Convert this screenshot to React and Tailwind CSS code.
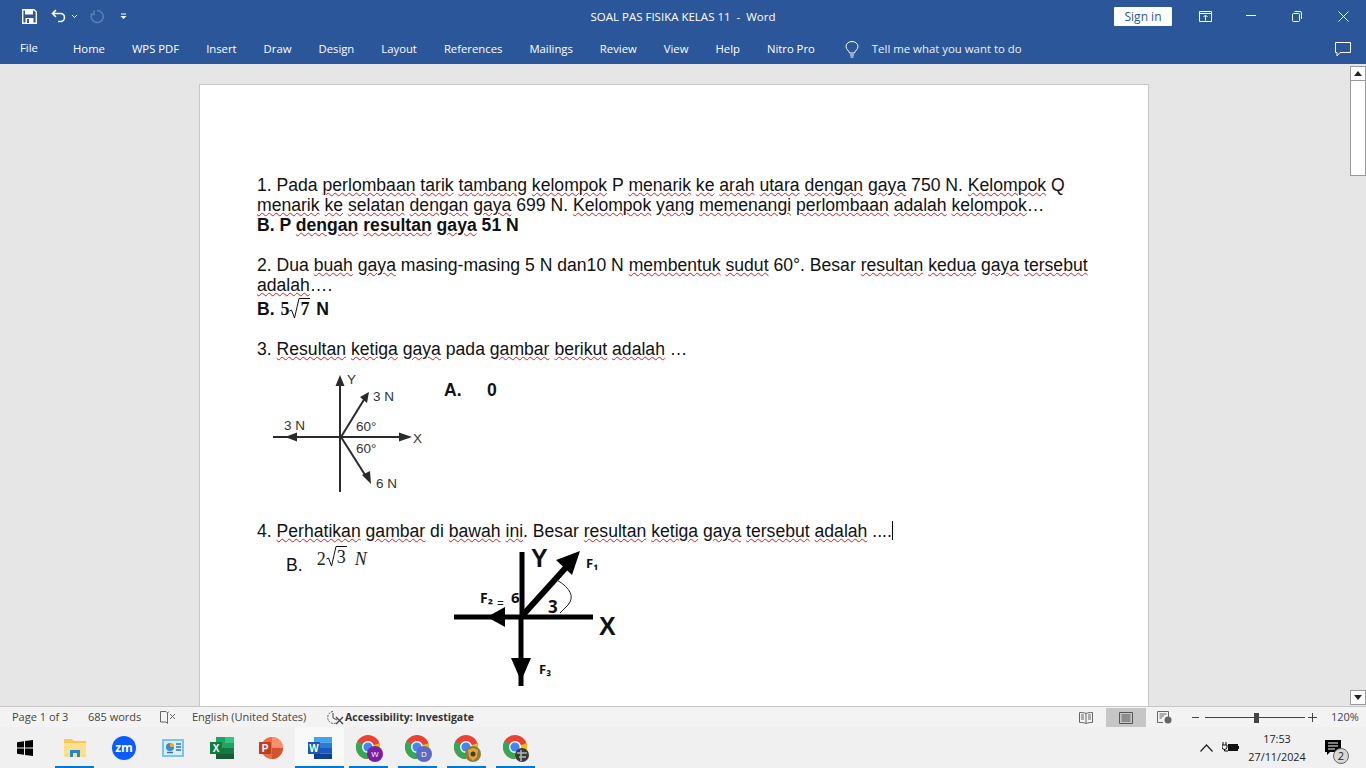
import React from 'react';

const TABS = ['Home', 'WPS PDF', 'Insert', 'Draw', 'Design', 'Layout', 'References', 'Mailings', 'Review', 'View', 'Help', 'Nitro Pro'];

// [word] = flagged by the spell checker
function Checked({ text }) {
  return text.split(/(\[[^\]]+\])/).map((part, i) =>
    part.startsWith('[') ? (
      <span key={i} className="underline decoration-wavy decoration-[#e5141f] decoration-1 underline-offset-1">{part.slice(1, -1)}</span>
    ) : (
      <span key={i}>{part}</span>
    )
  );
}

function Line({ text, bold }) {
  return (
    <div className={`h-5 leading-5 whitespace-pre ${bold ? 'font-bold' : ''}`}>
      <Checked text={text} />
    </div>
  );
}

function Root({ value, className }) {
  return (
    <span className={`inline-flex items-start ${className}`}>
      <svg width="11" height="22" viewBox="0 0 11 22" className="-mr-px">
        <path d="M0.5 13 L2.5 12 L5.5 20 L10 0.5 L11 0.5" fill="none" stroke="#111" strokeWidth="1" />
      </svg>
      <span className="border-t border-[#111] leading-[20px] px-px">{value}</span>
    </span>
  );
}

function Arrow1() {
  return (
    <svg width="170" height="125" viewBox="0 0 170 125" className="shrink-0">
      <g stroke="#2a2a2a" strokeWidth="2" fill="#2a2a2a">
        <path d="M86 8 L86 120" />
        <path d="M19 65 L150 65" />
        <path d="M87 65 L111 26" />
        <path d="M87 65 L113 106" />
        <path d="M86 3 L81.5 14 L90.5 14 Z" stroke="none" />
        <path d="M31 65 L43 60.5 L43 69.5 Z" stroke="none" />
        <path d="M158 65 L145 60.5 L145 69.5 Z" stroke="none" />
        <path d="M115 20 L106 25 L113 31 Z" stroke="none" />
        <path d="M117 112 L108 103 L116 99 Z" stroke="none" />
      </g>
      <g fontFamily="Liberation Sans, sans-serif" fontSize="13.5" fill="#333">
        <text x="93" y="12">Y</text>
        <text x="119" y="29">3 N</text>
        <text x="30" y="58">3 N</text>
        <text x="102" y="59">60°</text>
        <text x="102" y="81">60°</text>
        <text x="159" y="71">X</text>
        <text x="122" y="116">6 N</text>
      </g>
    </svg>
  );
}

function Arrow2() {
  return (
    <svg width="180" height="140" viewBox="0 0 180 140" className="shrink-0 overflow-visible">
      <g stroke="#000" strokeWidth="5" fill="#000">
        <path d="M86 5 L86 72" />
        <path d="M18 70 L157 70" />
        <path d="M85 72 L85 139" />
        <path d="M86 69 L134 16" strokeWidth="6" />
        <path d="M144 4 L120 13 L136 28 Z" stroke="none" />
        <path d="M51 70 L69 60 L69 80 Z" stroke="none" />
        <path d="M85 134 L75 111 L95 111 Z" stroke="none" />
      </g>
      <path d="M121 33 Q142 46 132 58 L124 66" fill="none" stroke="#222" strokeWidth="1" />
      <g fontFamily="Open Sans, sans-serif" fontWeight="700" fill="#111">
        <text x="95" y="20" fontSize="25" fontFamily="Liberation Sans, sans-serif">Y</text>
        <text x="163" y="88" fontSize="25" fontFamily="Liberation Sans, sans-serif">X</text>
        <text x="150" y="21" fontSize="13">F₁</text>
        <text x="44" y="56" fontSize="14">F₂</text>
        <text x="61" y="61" fontSize="12" fontWeight="400">=</text>
        <text x="75" y="56" fontSize="15">6</text>
        <text x="112" y="66" fontSize="17">3</text>
        <text x="103" y="127" fontSize="13">F₃</text>
      </g>
    </svg>
  );
}

function Chrome({ badge }) {
  return (
    <svg width="28" height="28" viewBox="0 0 28 28">
      <circle cx="13" cy="13" r="12" fill="#ea4335" />
      <path d="M13 13 L2.6 7 A12 12 0 0 0 13 25 Z" fill="#34a853" />
      <path d="M13 13 L24.4 9.3 A12 12 0 0 1 13 25 Z" fill="#fbbc05" />
      <circle cx="13" cy="13" r="6" fill="#fff" />
      <circle cx="13" cy="13" r="4.6" fill="#4285f4" />
      {badge}
    </svg>
  );
}

const Taskbar = [
  {
    key: 'files', on: true,
    icon: (
      <svg width="22" height="20" viewBox="0 0 22 20">
        <path d="M0 1 H8 L10 3 H22 V19 H0 Z" fill="#f9c94e" />
        <path d="M0 5 H22 V19 H0 Z" fill="#ffe08a" />
        <path d="M6 12 H16 V19 H13 V15 H9 V19 H6 Z" fill="#1e88d9" />
      </svg>
    ),
  },
  {
    key: 'zoom',
    icon: (
      <svg width="24" height="24" viewBox="0 0 24 24">
        <circle cx="12" cy="12" r="12" fill="#0b5cff" />
        <text x="12" y="16" textAnchor="middle" fill="#fff" fontSize="12" fontWeight="700" fontFamily="Open Sans, sans-serif">zm</text>
      </svg>
    ),
  },
  {
    key: 'control',
    icon: (
      <svg width="22" height="18" viewBox="0 0 22 18">
        <rect width="22" height="18" fill="#7cc4ee" />
        <rect x="2" y="2" width="18" height="14" fill="#d8effb" />
        <circle cx="8" cy="8" r="4" fill="#2e8fd6" />
        <path d="M8 8 V4 A4 4 0 0 1 12 8 Z" fill="#f5a623" />
        <path d="M14 5 H19 M14 8 H19 M14 11 H19 M5 13.5 H11" stroke="#2e75b6" strokeWidth="1.5" />
      </svg>
    ),
  },
  {
    key: 'excel',
    icon: (
      <svg width="24" height="24" viewBox="0 0 24 24">
        <rect x="6" y="1" width="18" height="22" fill="#21a366" />
        <rect x="15" y="1" width="9" height="6" fill="#33c481" />
        <rect x="6" y="12" width="18" height="6" fill="#107c41" />
        <rect x="6" y="18" width="18" height="5" fill="#185c37" />
        <rect x="0" y="6" width="12" height="12" fill="#107c41" />
        <text x="6" y="16" textAnchor="middle" fill="#fff" fontSize="10" fontWeight="700" fontFamily="Liberation Sans, sans-serif">X</text>
      </svg>
    ),
  },
  {
    key: 'ppt',
    icon: (
      <svg width="24" height="24" viewBox="0 0 24 24">
        <circle cx="13" cy="12" r="11" fill="#ed6c47" />
        <path d="M13 1 A11 11 0 0 1 24 12 H13 Z" fill="#ff8f6b" />
        <path d="M13 12 H24 A11 11 0 0 1 13 23 Z" fill="#d35230" />
        <rect x="0" y="6" width="12" height="12" fill="#c43e1c" />
        <text x="6" y="16" textAnchor="middle" fill="#fff" fontSize="10" fontWeight="700" fontFamily="Liberation Sans, sans-serif">P</text>
      </svg>
    ),
  },
  {
    key: 'word', on: true, active: true,
    icon: (
      <svg width="24" height="24" viewBox="0 0 24 24">
        <rect x="6" y="1" width="18" height="5.5" fill="#41a5ee" />
        <rect x="6" y="6.5" width="18" height="5.5" fill="#2b7cd3" />
        <rect x="6" y="12" width="18" height="5.5" fill="#185abd" />
        <rect x="6" y="17.5" width="18" height="5.5" fill="#103f91" />
        <rect x="0" y="6" width="12" height="12" fill="#185abd" />
        <text x="6" y="16" textAnchor="middle" fill="#fff" fontSize="10" fontWeight="700" fontFamily="Liberation Sans, sans-serif">W</text>
      </svg>
    ),
  },
  {
    key: 'chrome-w', on: true,
    icon: (
      <Chrome badge={<g><circle cx="20" cy="20" r="8" fill="#7b1fa2" /><text x="20" y="23" textAnchor="middle" fill="#fff" fontSize="8" fontFamily="Open Sans, sans-serif">W</text></g>} />
    ),
  },
  {
    key: 'chrome-d', on: true,
    icon: (
      <Chrome badge={<g><circle cx="20" cy="20" r="8" fill="#5c6bc0" /><text x="20" y="23" textAnchor="middle" fill="#fff" fontSize="8" fontFamily="Open Sans, sans-serif">D</text></g>} />
    ),
  },
  {
    key: 'chrome-photo', on: true,
    icon: (
      <Chrome badge={<g><circle cx="20" cy="20" r="8" fill="#8a7a4a" /><path d="M15 16 L20 14 L25 16 L24 23 L20 27 L16 23 Z" fill="#e2a82b" /><circle cx="20" cy="20" r="2.5" fill="#4a3a20" /></g>} />
    ),
  },
  {
    key: 'chrome-dark', on: true,
    icon: (
      <Chrome badge={<g><circle cx="20" cy="21" r="7" fill="#3a3a3a" /><path d="M15 19 H25 M17 23 H24 M19 16 V27" stroke="#b5b5b5" strokeWidth="1.5" /></g>} />
    ),
  },
];

export default function App() {
  return (
    <div className="w-screen h-screen overflow-hidden flex flex-col bg-[#e6e6e6] font-['Open_Sans',sans-serif]">
      {/* title bar */}
      <div className="h-8 shrink-0 bg-[#2b579a] text-white grid grid-cols-[1fr_auto_1fr] items-center">
        <div className="flex items-center pl-[22px]">
          <svg width="15" height="15" viewBox="0 0 15 15">
            <path d="M0.7 0.7 H12 L14.3 3 V14.3 H0.7 Z" fill="none" stroke="#fff" strokeWidth="1.4" />
            <rect x="3" y="1" width="8" height="4.5" fill="#fff" />
            <rect x="3.5" y="9" width="8" height="5" fill="#fff" />
            <rect x="5" y="10" width="2" height="4" fill="#2b579a" />
          </svg>
          <svg width="16" height="14" viewBox="0 0 16 14" className="ml-[14px]">
            <path d="M5 1 L1.5 4.5 L5 8 M2 4.5 H9.5 A3.8 3.8 0 0 1 9.5 12.5 H7" fill="none" stroke="#fff" strokeWidth="1.6" />
          </svg>
          <svg width="7" height="5" viewBox="0 0 7 5" className="ml-1">
            <path d="M1 1 L3.5 3.5 L6 1" fill="none" stroke="#fff" strokeWidth="1" />
          </svg>
          <svg width="15" height="15" viewBox="0 0 15 15" className="ml-[12px]">
            <path d="M4 1.5 V5.5 H0.5 M2.2 4.2 A6 6 0 1 0 7.5 1.5 H7" fill="none" stroke="#5b7fb5" strokeWidth="1.6" />
          </svg>
          <svg width="7" height="7" viewBox="0 0 7 7" className="ml-[15px]">
            <path d="M1 1 H6" stroke="#fff" strokeWidth="1" />
            <path d="M0.5 3 H6.5 L3.5 6 Z" fill="#fff" />
          </svg>
        </div>
        <div className="text-[11.5px] leading-none whitespace-pre pt-[2px]">SOAL PAS FISIKA KELAS 11  -  Word</div>
        <div className="flex items-center justify-end">
          <div className="w-[58px] h-[19px] bg-white rounded-[1px] text-[#2b579a] text-[12px] leading-[20px] text-center mr-[10px]">Sign in</div>
          <div className="w-[46px] flex justify-center">
            <svg width="13" height="11" viewBox="0 0 13 11">
              <path d="M0.5 0.5 H12.5 V10.5 H0.5 Z M0.5 2.5 H12.5" fill="none" stroke="#fff" />
              <path d="M6.5 9.5 V4.5 M4.5 6 L6.5 4 L8.5 6" fill="none" stroke="#fff" />
            </svg>
          </div>
          <div className="w-[46px] flex justify-center">
            <svg width="10" height="2" viewBox="0 0 10 2"><path d="M0 0.5 H10" stroke="#fff" /></svg>
          </div>
          <div className="w-[46px] flex justify-center">
            <svg width="10" height="11" viewBox="0 0 10 11">
              <rect x="0.5" y="2.5" width="7" height="8" rx="1" fill="none" stroke="#fff" />
              <path d="M2.5 0.5 H8 A1.5 1.5 0 0 1 9.5 2 V8" fill="none" stroke="#fff" />
            </svg>
          </div>
          <div className="w-[46px] flex justify-center">
            <svg width="11" height="11" viewBox="0 0 11 11"><path d="M0.5 0.5 L10.5 10.5 M10.5 0.5 L0.5 10.5" stroke="#fff" /></svg>
          </div>
        </div>
      </div>

      {/* ribbon tabs */}
      <div className="h-8 shrink-0 bg-[#2b579a] text-white text-[11.3px] flex items-center pt-[2px]">
        <div className="pl-5 w-[73px] -mt-[2px]">File</div>
        <div className="flex items-center gap-[27px]">
          {TABS.map((t) => (
            <div key={t} className="whitespace-nowrap">{t}</div>
          ))}
        </div>
        <svg width="14" height="17" viewBox="0 0 14 17" className="ml-[30px]">
          <path d="M4.5 12 C4 9.5 1 8.5 1 5.5 A6 5 0 0 1 13 5.5 C13 8.5 10 9.5 9.5 12 Z M5 14 H9 M5.5 16 H8.5" fill="none" stroke="#fff" />
        </svg>
        <div className="ml-[13px] text-[#f0f0f0] text-[11.4px]">Tell me what you want to do</div>
        <svg width="16" height="15" viewBox="0 0 16 15" className="ml-auto mr-[15px]">
          <path d="M0.5 0.5 H15.5 V10.5 H5 L2 14 V10.5 H0.5 Z" fill="none" stroke="#fff" />
        </svg>
      </div>

      {/* document area */}
      <div className="flex-1 min-h-0 flex">
        <div className="flex-1 min-w-0 overflow-hidden pt-5 pl-[199px]">
          <div className="w-[950px] h-[800px] bg-white border border-[#c6c6c6] pt-[90px] pl-[57px] text-[17.6px] text-[#111] font-['Liberation_Sans',sans-serif]">
            <Line text="1. Pada [perlombaan] [tarik] [tambang] [kelompok] P [menarik] [ke] [arah] [utara] [dengan] [gaya] 750 N. [Kelompok] Q" />
            <Line text="[menarik] [ke] [selatan] [dengan] [gaya] 699 N. [Kelompok] [yang] [memenangi] [perlombaan] [adalah] [kelompok]…" />
            <Line bold text="B. P [dengan] [resultan] [gaya] 51 N" />
            <div className="h-5" />
            <Line text="2. Dua [buah] [gaya] masing-masing 5 N dan10 N [membentuk] [sudut] 60°. Besar [resultan] [kedua] [gaya] [tersebut]" />
            <Line text="[adalah]…." />
            <div className="h-6 flex items-center font-bold whitespace-pre pt-[5px]">
              B. <span className="font-['Liberation_Serif',serif] text-[18px] ml-px">5</span>
              <Root value="7" className="font-['Liberation_Serif',serif] text-[18px] -mt-[2px]" />
              <span className="ml-px"> N</span>
            </div>
            <div className="h-5" />
            <Line text="3. [Resultan] [ketiga] [gaya] pada [gambar] [berikut] [adalah] …" />
            <div className="h-[162px] flex items-start pt-[13px]">
              <div className="-ml-[3px]"><Arrow1 /></div>
              <div className="ml-[20px] mt-[8px] font-bold whitespace-pre leading-5 flex">
                <span className="w-[43px]">A.</span>
                <span>0</span>
              </div>
            </div>
            <div className="h-5 leading-5 whitespace-pre flex">
              <span><Checked text="4. [Perhatikan] [gambar] di [bawah] [ini]. Besar [resultan] [ketiga] [gaya] [tersebut] [adalah] ...." /></span>
              <span className="w-px h-[19px] bg-black" />
            </div>
            <div className="flex items-start">
              <div className="ml-[29px] mt-[14px] leading-5">B.</div>
              <div className="ml-[14px] mt-[5px] text-[18px] flex items-start font-['Liberation_Serif',serif] whitespace-pre text-[#222]">
                <span>2</span>
                <Root value="3" />
                <span className="italic ml-2">N</span>
              </div>
              <div className="ml-[69px] mt-[6px]"><Arrow2 /></div>
            </div>
          </div>
        </div>

        {/* scrollbar */}
        <div className="w-4 shrink-0 flex flex-col pt-[2px] pb-px bg-[#e6e6e6]">
          <div className="h-[15px] bg-white border border-[#9a9a9a] flex items-center justify-center">
            <svg width="8" height="5" viewBox="0 0 8 5"><path d="M4 0 L8 5 H0 Z" fill="#222" /></svg>
          </div>
          <div className="h-[95px] bg-white border-x border-b border-[#9a9a9a]" />
          <div className="flex-1" />
          <div className="h-[15px] bg-white border border-[#9a9a9a] flex items-center justify-center">
            <svg width="8" height="5" viewBox="0 0 8 5"><path d="M0 0 H8 L4 5 Z" fill="#222" /></svg>
          </div>
        </div>
      </div>

      {/* status bar */}
      <div className="h-[21px] shrink-0 bg-[#f3f3f3] border-t border-[#c6c6c6] flex items-center text-[11px] text-[#444] pt-px">
        <div className="pl-3 w-[88px]">Page 1 of 3</div>
        <div className="w-[72px]">685 words</div>
        <svg width="16" height="13" viewBox="0 0 16 13" className="mr-4">
          <path d="M0.5 0.5 H6 L7.5 2 V12.5 L6 11 H0.5 Z M7.5 2 L9 0.5" fill="none" stroke="#666" />
          <path d="M10 3 L15 8 M15 3 L10 8" stroke="#666" />
        </svg>
        <div className="w-[134px]">English (United States)</div>
        <svg width="18" height="15" viewBox="0 0 18 15" className="mr-px">
          <path d="M7 1.5 A6 6 0 1 0 10 13" fill="none" stroke="#555" strokeDasharray="2 1" />
          <path d="M7 3 V8 L11 10" fill="none" stroke="#444" />
          <path d="M10 7 L17 14 M17 7 L10 14" stroke="#444" strokeWidth="1.3" />
        </svg>
        <div className="font-bold text-[#333] text-[10.5px]">Accessibility: Investigate</div>
        <div className="ml-auto flex items-center h-full">
          <svg width="14" height="12" viewBox="0 0 14 12">
            <path d="M7 1.5 C5 0.5 3 0.5 0.5 0.5 V10.5 C3 10.5 5 10.5 7 11.5 C9 10.5 11 10.5 13.5 10.5 V0.5 C11 0.5 9 0.5 7 1.5 Z M7 1.5 V11.5 M2 3 H5 M2 5 H5 M2 7 H5 M9 3 H12 M9 5 H12 M9 7 H12" fill="none" stroke="#666" />
          </svg>
          <div className="w-10 h-full ml-[13px] bg-[#c6c6c6] flex items-center justify-center">
            <svg width="14" height="12" viewBox="0 0 14 12">
              <path d="M0.5 0.5 H13.5 V11.5 H0.5 Z M2.5 3 H11.5 M2.5 5 H11.5 M2.5 7 H11.5 M2.5 9 H11.5" fill="none" stroke="#555" />
            </svg>
          </div>
          <svg width="15" height="13" viewBox="0 0 15 13" className="ml-[11px]">
            <path d="M0.5 0.5 H11.5 V6 M0.5 0.5 V11.5 H6 M2.5 3 H9.5 M2.5 5 H7 M2.5 7 H5" fill="none" stroke="#666" />
            <circle cx="11" cy="9" r="3.5" fill="#666" />
          </svg>
          <div className="ml-5 w-[7px] h-px bg-[#444]" />
          <div className="ml-[6px] w-[100px] h-px bg-[#444] relative">
            <div className="absolute left-[49px] -top-[4px] w-[5px] h-[10px] bg-[#444]" />
          </div>
          <svg width="9" height="9" viewBox="0 0 9 9" className="ml-[3px]"><path d="M0 4.5 H9 M4.5 0 V9" stroke="#444" /></svg>
          <div className="w-[48px] pl-[14px] mr-px whitespace-nowrap">120%</div>
        </div>
      </div>

      {/* taskbar */}
      <div className="h-[41px] shrink-0 bg-[#f0f0f0] flex items-stretch">
        <div className="w-[50px] flex items-center justify-center">
          <svg width="16" height="16" viewBox="0 0 16 16">
            <path d="M0 2.2 L7 1.2 V7.5 H0 Z M8 1 L16 0 V7.5 H8 Z M0 8.5 H7 V14.8 L0 13.8 Z M8 8.5 H16 V16 L8 15 Z" fill="#000" />
          </svg>
        </div>
        {Taskbar.map((app) => (
          <div key={app.key} className={`w-[49px] flex items-center justify-center relative pt-px ${app.active ? 'bg-[#f9f9f9]' : ''}`}>
            {app.icon}
            {app.on && <div className={`absolute bottom-0 h-[2px] bg-[#0078d7] ${app.active ? 'left-0 right-0' : 'left-[5px] right-[5px]'}`} />}
          </div>
        ))}
        <div className="ml-auto flex items-center text-[#222]">
          <svg width="13" height="8" viewBox="0 0 13 8"><path d="M0.5 7.5 L6.5 1 L12.5 7.5" fill="none" stroke="#222" strokeWidth="1.2" /></svg>
          <svg width="17" height="11" viewBox="0 0 17 11" className="ml-[9px]">
            <path d="M1 0 V3 M4 0 V3 M0 3 H5 V5 A2.5 2.5 0 0 1 0 5 Z M2.5 7 V9 H6" fill="none" stroke="#111" />
            <rect x="6" y="2" width="10" height="7" fill="#111" />
            <rect x="16" y="4" width="1" height="3" fill="#111" />
          </svg>
          <div className="w-[76px] text-center text-[10.8px] leading-[18px]">
            <div>17:53</div>
            <div>27/11/2024</div>
          </div>
          <div className="w-[30px] ml-2 mr-[13px] relative h-[24px]">
            <svg width="16" height="16" viewBox="0 0 16 16" className="absolute left-[2px] top-[4px]">
              <path d="M0 0 H16 V12 H5 L2 15 V12 H0 Z" fill="#000" />
              <path d="M3 3 H13 M3 6 H13 M3 9 H10" stroke="#fff" />
            </svg>
            <div className="absolute left-[10px] top-[12px] w-4 h-4 rounded-full bg-[#d8d8d8] border border-[#666] text-[11px] leading-[14px] text-center">2</div>
          </div>
        </div>
      </div>
    </div>
  );
}
